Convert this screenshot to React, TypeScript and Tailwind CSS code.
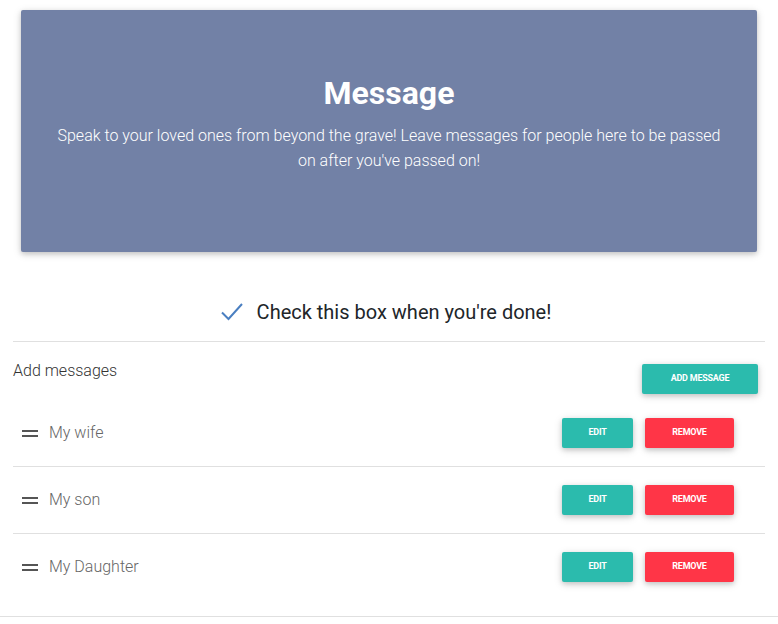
import React from 'react'

const PEOPLE = ['My wife', 'My son', 'My Daughter']

function Handle() {
  return (
    <span className="flex w-[16px] flex-col gap-[3px]">
      <span className="block h-[2px] w-full bg-[#555]" />
      <span className="block h-[2px] w-full bg-[#555]" />
    </span>
  )
}

function Btn({ label, red, w }: { label: string; red?: boolean; w: string }) {
  return (
    <button
      className={
        'flex h-[30px] items-center justify-center rounded-[2px] text-[9px] font-bold uppercase tracking-tight text-white shadow-[0_2px_5px_0_rgba(0,0,0,0.16),0_2px_10px_0_rgba(0,0,0,0.12)] ' +
        (red ? 'bg-[#ff3547] ' : 'bg-[#2bbbad] ') +
        w
      }
    >
      {label}
    </button>
  )
}

export default function App() {
  return (
    <div className="min-h-screen bg-white font-['Roboto',sans-serif] text-[#212529]">
      <div className="px-[21px] pt-[10px]">
        <div className="flex h-[242px] flex-col items-center rounded-[2px] bg-[#7281a6] px-[34px] pt-[63px] text-center text-white shadow-[0_2px_5px_0_rgba(0,0,0,0.16),0_2px_10px_0_rgba(0,0,0,0.12)]">
          <h1 className="text-[32px] font-bold leading-[40px]">Message</h1>
          <p className="mt-[10px] text-[16px] font-light leading-[25px]">
            Speak to your loved ones from beyond the grave! Leave messages for people here to be passed on after you've passed on!
          </p>
        </div>
      </div>

      <div className="mt-[46px] px-[13px]">
        <div className="flex items-center justify-center gap-[13px] pb-[15px] pr-[7px]">
          <svg width="24" height="20" viewBox="0 0 24 20" fill="none">
            <path d="M2 10.5 L8.5 17 L22 2" stroke="#4a7fc1" strokeWidth="2" />
          </svg>
          <span className="text-[20px] font-normal leading-[28px]">Check this box when you're done!</span>
        </div>

        <div className="border-t border-[#e0e0e0]">
          <div className="flex items-start justify-between pt-[17px]">
            <span className="text-[16px] font-light text-[#333]">Add messages</span>
            <div className="mr-[7px] mt-[5px]">
              <Btn label="Add message" w="w-[116px]" />
            </div>
          </div>

          {PEOPLE.map((p, i) => (
            <div
              key={p}
              className={
                'flex items-center justify-between pl-[9px] pr-[31px] ' +
                (i === 0 ? 'h-[73px] border-b border-[#e0e0e0] pt-[6px] ' : 'h-[67px] border-b border-[#e0e0e0] ') +
                (i === PEOPLE.length - 1 ? 'h-[82px] pb-[16px] border-b-0' : '')
              }
            >
              <div className="flex items-center gap-[11px]">
                <Handle />
                <span className="text-[16px] font-light text-[#666]">{p}</span>
              </div>
              <div className="flex gap-[12px]">
                <Btn label="Edit" w="w-[71px]" />
                <Btn label="Remove" red w="w-[89px]" />
              </div>
            </div>
          ))}
        </div>
      </div>
      <div className="border-t border-[#e0e0e0]" />
    </div>
  )
}
